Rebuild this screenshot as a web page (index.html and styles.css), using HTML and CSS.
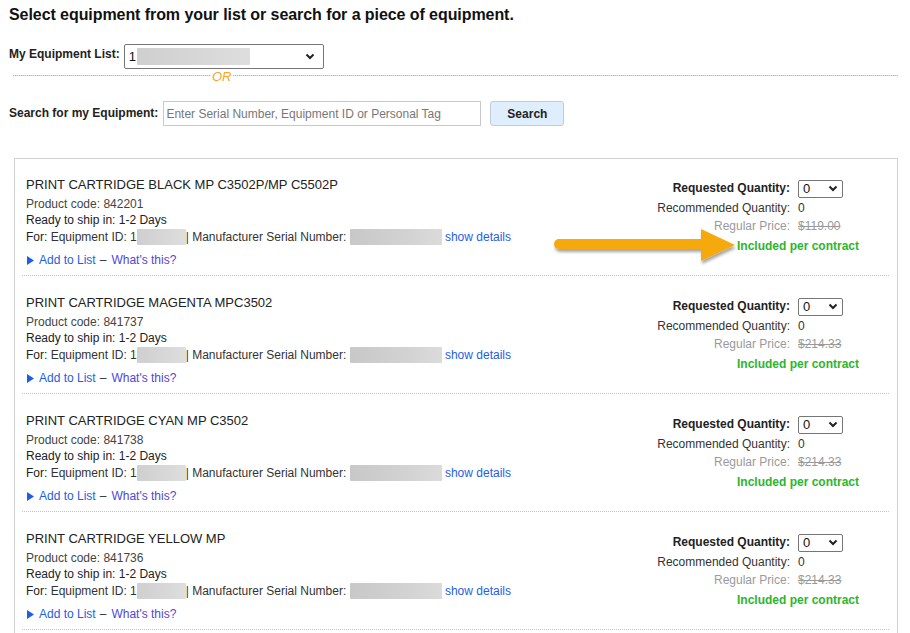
FILE: index.html
```html
<!DOCTYPE html>
<html>
<head>
<meta charset="utf-8">
<link rel="stylesheet" href="styles.css">
</head>
<body>
<div class="page">
  <h1 class="heading">Select equipment from your list or search for a piece of equipment.</h1>

  <div class="list-row">
    <label class="field-label list-label">My Equipment List:</label>
    <div class="fake-select">
      <span class="sel-text">1</span><span class="blur blur-list"></span>
      <svg class="chev" width="10" height="7" viewBox="0 0 10 7"><polyline points="1.5,1.5 5,5 8.5,1.5" fill="none" stroke="#222" stroke-width="2"/></svg>
    </div>
  </div>

  <div class="or-row">
    <span class="or-seg or-seg-left"></span>
    <span class="or-text">OR</span>
    <span class="or-seg or-seg-right"></span>
  </div>

  <div class="search-row">
    <label class="field-label search-label">Search for my Equipment:</label>
    <input class="search-input" type="text" placeholder="Enter Serial Number, Equipment ID or Personal Tag">
    <button class="search-btn">Search</button>
  </div>

  <div class="panel">
    <svg class="callout" width="192" height="44" viewBox="0 0 192 44">
      <defs>
        <filter id="sh" x="-10%" y="-30%" width="130%" height="180%">
          <feDropShadow dx="1" dy="3" stdDeviation="1.6" flood-color="#000" flood-opacity="0.35"/>
        </filter>
      </defs>
      <g filter="url(#sh)">
        <line x1="6" y1="18" x2="152" y2="18" stroke="#f5a90f" stroke-width="10" stroke-linecap="round"/>
        <polygon points="148,3 182,19 148,35" fill="#f5a90f"/>
      </g>
    </svg>

    <div class="item">
      <div class="info">
        <div class="title">PRINT CARTRIDGE BLACK MP C3502P/MP C5502P</div>
        <div class="line code">Product code: 842201</div>
        <div class="line ship">Ready to ship in: 1-2 Days</div>
        <div class="line for"><span class="for-lbl">For:</span> Equipment ID: 1<span class="blur blur-id"></span>| Manufacturer Serial Number: <span class="blur blur-sn"></span> <a class="link">show details</a></div>
        <div class="actions"><svg class="tri" width="7" height="9" viewBox="0 0 7 9"><polygon points="0,0 7,4.5 0,9" fill="#1e5ee6"/></svg><a class="link">Add to List</a><span class="dash">–</span><a class="link visited">What's this?</a></div>
      </div>
      <div class="qty">
        <span class="lbl req">Requested Quantity:</span>
        <span class="qsel">0<svg class="chev" width="10" height="7" viewBox="0 0 10 7"><polyline points="1.5,1.5 5,5 8.5,1.5" fill="none" stroke="#222" stroke-width="2"/></svg></span>
        <span class="lbl">Recommended Quantity:</span><span class="val">0</span>
        <span class="lbl muted">Regular Price:</span><span class="val muted strike">$119.00</span>
        <span class="incl">Included per contract</span>
      </div>
    </div>

    <div class="item">
      <div class="info">
        <div class="title">PRINT CARTRIDGE MAGENTA MPC3502</div>
        <div class="line code">Product code: 841737</div>
        <div class="line ship">Ready to ship in: 1-2 Days</div>
        <div class="line for"><span class="for-lbl">For:</span> Equipment ID: 1<span class="blur blur-id"></span>| Manufacturer Serial Number: <span class="blur blur-sn"></span> <a class="link">show details</a></div>
        <div class="actions"><svg class="tri" width="7" height="9" viewBox="0 0 7 9"><polygon points="0,0 7,4.5 0,9" fill="#1e5ee6"/></svg><a class="link">Add to List</a><span class="dash">–</span><a class="link visited">What's this?</a></div>
      </div>
      <div class="qty">
        <span class="lbl req">Requested Quantity:</span>
        <span class="qsel">0<svg class="chev" width="10" height="7" viewBox="0 0 10 7"><polyline points="1.5,1.5 5,5 8.5,1.5" fill="none" stroke="#222" stroke-width="2"/></svg></span>
        <span class="lbl">Recommended Quantity:</span><span class="val">0</span>
        <span class="lbl muted">Regular Price:</span><span class="val muted strike">$214.33</span>
        <span class="incl">Included per contract</span>
      </div>
    </div>

    <div class="item">
      <div class="info">
        <div class="title">PRINT CARTRIDGE CYAN MP C3502</div>
        <div class="line code">Product code: 841738</div>
        <div class="line ship">Ready to ship in: 1-2 Days</div>
        <div class="line for"><span class="for-lbl">For:</span> Equipment ID: 1<span class="blur blur-id"></span>| Manufacturer Serial Number: <span class="blur blur-sn"></span> <a class="link">show details</a></div>
        <div class="actions"><svg class="tri" width="7" height="9" viewBox="0 0 7 9"><polygon points="0,0 7,4.5 0,9" fill="#1e5ee6"/></svg><a class="link">Add to List</a><span class="dash">–</span><a class="link visited">What's this?</a></div>
      </div>
      <div class="qty">
        <span class="lbl req">Requested Quantity:</span>
        <span class="qsel">0<svg class="chev" width="10" height="7" viewBox="0 0 10 7"><polyline points="1.5,1.5 5,5 8.5,1.5" fill="none" stroke="#222" stroke-width="2"/></svg></span>
        <span class="lbl">Recommended Quantity:</span><span class="val">0</span>
        <span class="lbl muted">Regular Price:</span><span class="val muted strike">$214.33</span>
        <span class="incl">Included per contract</span>
      </div>
    </div>

    <div class="item">
      <div class="info">
        <div class="title">PRINT CARTRIDGE YELLOW MP</div>
        <div class="line code">Product code: 841736</div>
        <div class="line ship">Ready to ship in: 1-2 Days</div>
        <div class="line for"><span class="for-lbl">For:</span> Equipment ID: 1<span class="blur blur-id"></span>| Manufacturer Serial Number: <span class="blur blur-sn"></span> <a class="link">show details</a></div>
        <div class="actions"><svg class="tri" width="7" height="9" viewBox="0 0 7 9"><polygon points="0,0 7,4.5 0,9" fill="#1e5ee6"/></svg><a class="link">Add to List</a><span class="dash">–</span><a class="link visited">What's this?</a></div>
      </div>
      <div class="qty">
        <span class="lbl req">Requested Quantity:</span>
        <span class="qsel">0<svg class="chev" width="10" height="7" viewBox="0 0 10 7"><polyline points="1.5,1.5 5,5 8.5,1.5" fill="none" stroke="#222" stroke-width="2"/></svg></span>
        <span class="lbl">Recommended Quantity:</span><span class="val">0</span>
        <span class="lbl muted">Regular Price:</span><span class="val muted strike">$214.33</span>
        <span class="incl">Included per contract</span>
      </div>
    </div>
  </div>
</div>
</body>
</html>
```

FILE: styles.css
```css
* { box-sizing: border-box; }

html, body {
  margin: 0;
  padding: 0;
  background: #fff;
}

body {
  font-family: "Liberation Sans", Arial, sans-serif;
  font-size: 12px;
  color: #333;
  overflow: hidden;
}

.page {
  padding: 6px 12px 0 9px;
}

.heading {
  margin: 0;
  font-size: 16px;
  font-weight: bold;
  line-height: 18px;
  color: #111;
  letter-spacing: -0.07px;
}

.field-label {
  font-weight: bold;
  font-size: 12px;
  color: #222;
  line-height: 14px;
}

.list-row {
  display: flex;
  align-items: flex-start;
  margin-top: 20px;
}

.list-label {
  padding-top: 3px;
  margin-right: 4px;
}

.fake-select {
  width: 200px;
  height: 25px;
  border: 1px solid #767676;
  border-radius: 2px;
  display: flex;
  align-items: center;
  padding-left: 4px;
  position: relative;
  color: #111;
  font-size: 13px;
}

.sel-text {
  line-height: 14px;
}

.blur {
  display: inline-block;
  background: linear-gradient(90deg, #cfcfcf 0%, #d6d6d6 50%, #dedede 100%);
  border-radius: 1px;
}

.blur-list {
  width: 113px;
  height: 17px;
  margin-left: 1px;
}

.fake-select .chev {
  margin-left: auto;
  margin-right: 8px;
}

.or-row {
  display: flex;
  align-items: flex-start;
  margin-top: 1px;
  margin-left: 4px;
  height: 13px;
}

.or-seg {
  height: 1px;
  margin-top: 5px;
  background: repeating-linear-gradient(90deg, #f4ae1c 0 1px, #fde2a0 1px 2px);
}

.or-seg-left {
  width: 198px;
}

.or-seg-right {
  flex: 1;
}

.or-text {
  font-style: italic;
  font-size: 13px;
  line-height: 13px;
  color: #f6a623;
  padding: 0 1px;
}

.search-row {
  display: flex;
  align-items: flex-start;
  margin-top: 18px;
}

.search-label {
  padding-top: 5px;
  margin-right: 5px;
}

.search-input {
  width: 318px;
  height: 25px;
  border: 1px solid #c8c8c8;
  border-radius: 0;
  padding: 0 2px;
  font-family: "Liberation Sans", Arial, sans-serif;
  font-size: 12px;
  outline: none;
  margin: 0;
}

.search-input::placeholder {
  color: #777;
}

.search-btn {
  margin: 0 0 0 9px;
  width: 74px;
  height: 25px;
  background: #dfeefd;
  border: 1px solid #c3ccd6;
  border-radius: 3px;
  font-family: "Liberation Sans", Arial, sans-serif;
  font-weight: bold;
  font-size: 12px;
  color: #222;
  padding: 0;
}

.panel {
  position: relative;
  margin-top: 32px;
  margin-left: 5px;
  border: 1px solid #cfcfcf;
  border-bottom: none;
  height: 480px;
}

.callout {
  position: absolute;
  left: 538px;
  top: 67px;
}

.item {
  display: flex;
  margin: 0 8px 0 7px;
  padding: 19px 29px 7px 4px;
  border-bottom: 1px dotted #c4c4c4;
}

.item:first-of-type {
  padding-top: 18px;
}

.info {
  flex: 1;
}

.title {
  font-size: 13px;
  line-height: 16px;
  color: #222;
  margin-bottom: 3px;
}

.line {
  line-height: 16px;
  color: #333;
}

.code {
  color: #444;
}

.ship {
  color: #222;
}

.for {
  margin-top: 1px;
  color: #333;
}

.for-lbl {
  color: #222;
}

.blur-id {
  width: 49px;
  height: 16px;
  vertical-align: -4px;
}

.blur-sn {
  width: 92px;
  height: 16px;
  vertical-align: -4px;
  background: linear-gradient(90deg, #c8c8c8 0%, #d2d2d2 60%, #dbdbdb 100%);
}

.link {
  color: #1e5ee6;
  text-decoration: none;
}

.visited {
  color: #5048d8;
}

.actions {
  margin-top: 7px;
  line-height: 16px;
  display: flex;
  align-items: center;
}

.tri {
  margin-left: 1px;
  margin-right: 5px;
}

.dash {
  margin: 0 5px 0 4px;
  color: #333;
}

.qty {
  margin-top: 1px;
  display: grid;
  grid-template-columns: auto 62px;
  column-gap: 8px;
  align-items: center;
  align-self: flex-start;
}

.lbl {
  text-align: right;
  line-height: 18px;
  color: #333;
}

.req {
  font-weight: bold;
  color: #222;
  line-height: 21px;
}

.val {
  line-height: 18px;
  color: #333;
}

.muted {
  color: #9a9a9a;
}

.strike {
  text-decoration: line-through;
}

.qsel {
  width: 45px;
  height: 18px;
  border: 1px solid #767676;
  border-radius: 2px;
  display: flex;
  align-items: center;
  padding-left: 4px;
  font-size: 13px;
  color: #111;
  line-height: 14px;
}

.qsel .chev {
  margin-left: auto;
  margin-right: 4px;
}

.incl {
  grid-column: 1 / span 2;
  text-align: right;
  font-weight: bold;
  color: #2db52d;
  line-height: 18px;
  margin-top: 2px;
  padding-right: 1px;
}
```
